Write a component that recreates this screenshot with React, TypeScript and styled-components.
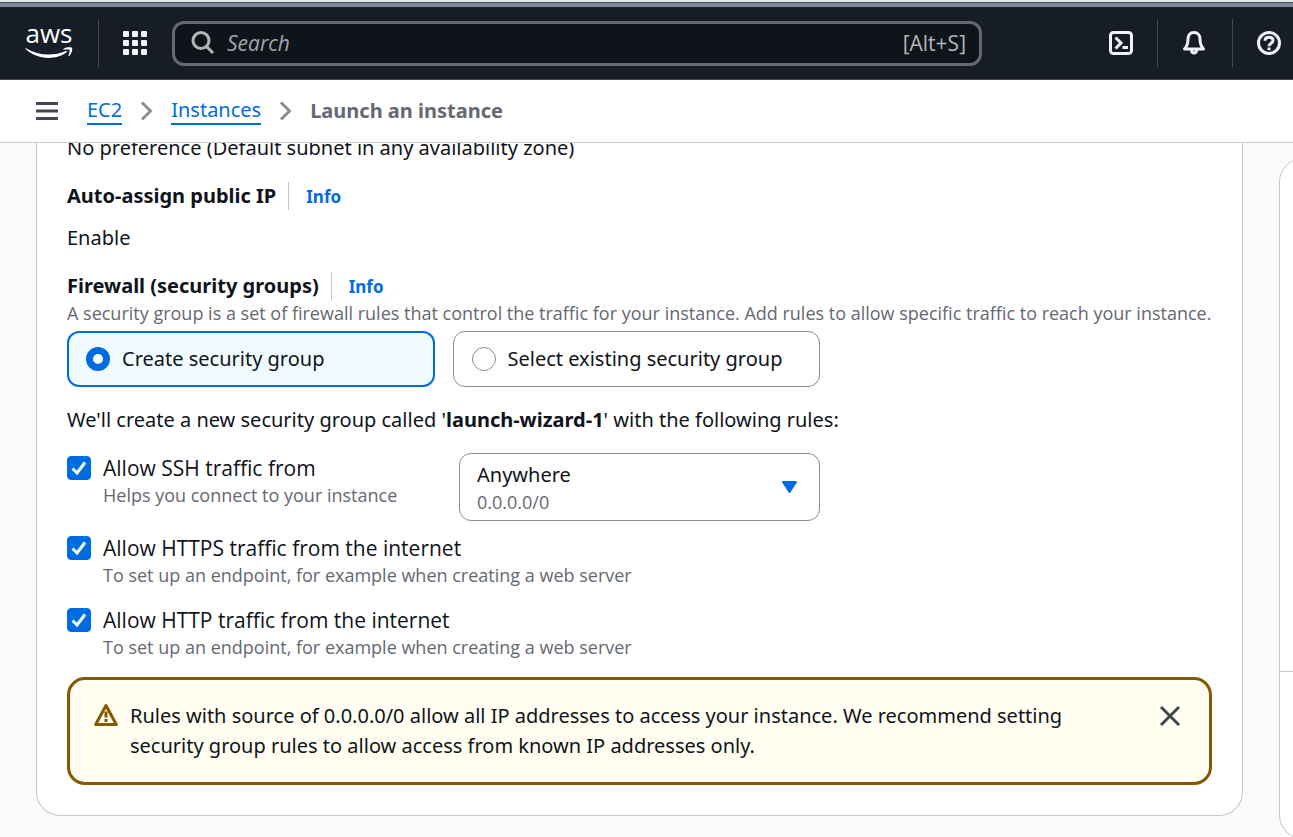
import React, { useState } from "react";
import styled, { createGlobalStyle, css } from "styled-components";

const c = {
  text: "#0f141a",
  muted: "#656871",
  link: "#006ce0",
  border: "#c6c6cd",
  control: "#8c8c94",
  page: "#fbfbfd",
  nav: "#161d26",
  navIcon: "#f0f2f8",
  warning: "#855900",
};

const bodyFont = `"Noto Sans", "Open Sans", sans-serif`;
const labelFont = `"Open Sans", "Noto Sans", sans-serif`;

const GlobalStyle = createGlobalStyle`
  *, *::before, *::after { box-sizing: border-box; }
  body {
    margin: 0;
    color: ${c.text};
    background: ${c.page};
    font-family: ${bodyFont};
    font-size: 20px;
    line-height: 30px;
    overflow-x: hidden;
  }
  p, h3, ol { margin: 0; padding: 0; }
  button, input, select { font: inherit; color: inherit; margin: 0; }
  svg { display: block; flex: none; }
`;

const Page = styled.div`
  min-height: 100vh;
  display: flex;
  flex-direction: column;
`;

const WindowEdge = styled.div`
  height: 7px;
  flex: none;
  background: #7d879c;
  border-top: 2px solid #e4e7ee;
  box-shadow: inset 0 1px 0 #414b5c;
`;

const TopBar = styled.header`
  height: 73px;
  flex: none;
  display: flex;
  align-items: center;
  background: ${c.nav};
  border-bottom: 1px solid #424650;
  padding: 0 12px 0 24px;
  font-family: ${labelFont};
  font-size: 21px;
`;

const Logo = styled.a`
  width: 50px;
  display: flex;
  flex-direction: column;
  align-items: center;
  gap: 8px;
  color: #fff;
  text-decoration: none;
  font-size: 26px;
  font-weight: 500;
  line-height: 12px;
`;

const Divider = styled.span`
  width: 1px;
  height: 48px;
  background: #424650;
`;

const NavLine = styled(Divider)`
  margin: 0 24px;
`;

const IconButton = styled.button`
  display: flex;
  align-items: center;
  justify-content: center;
  padding: 0;
  border: 0;
  background: none;
  color: ${c.navIcon};
`;

const SearchBox = styled.label`
  flex: 0 1 810px;
  min-width: 0;
  height: 45px;
  display: flex;
  align-items: center;
  gap: 12px;
  padding: 0 13px 0 16px;
  margin: 0 auto 0 25px;
  background: #0f141a;
  border: 3px solid #656871;
  border-radius: 12px;
  color: #b4b4bb;
`;

const SearchInput = styled.input`
  flex: 1;
  min-width: 0;
  padding: 0;
  border: 0;
  outline: 0;
  background: none;
  &::placeholder { color: #a4a4ad; font-style: italic; opacity: 1; }
`;

const Tools = styled.div`
  display: flex;
  align-items: center;
  gap: 24px;
`;

const CrumbBar = styled.nav`
  height: 63px;
  flex: none;
  display: flex;
  align-items: center;
  gap: 28px;
  padding: 0 35px;
  background: #fff;
  border-bottom: 1px solid ${c.border};
`;

const Crumbs = styled.ol`
  display: flex;
  align-items: center;
  gap: 18px;
  list-style: none;
  color: ${c.muted};
  li { display: flex; align-items: center; gap: 18px; }
  li:last-child { font-weight: 700; }
`;

const CrumbLink = styled.a`
  color: ${c.link};
  text-decoration: none;
  line-height: 26px;
  border-bottom: 2px solid ${c.link};
`;

const Workspace = styled.main`
  flex: 1;
  display: grid;
  grid-template-columns: minmax(0, 1fr) 14px;
  column-gap: 36px;
  padding-left: 36px;
  overflow: hidden;
`;

const Panel = styled.section`
  margin-bottom: 21px;
  padding: 0 30px 30px;
  background: #fff;
  border: 1px solid ${c.border};
  border-top: 0;
  border-radius: 0 0 24px 24px;
`;

/* Value of the field that is scrolled half under the breadcrumb bar. */
const ScrolledValue = styled.p`
  margin-top: -10px;
  margin-bottom: 18px;
`;

const FieldLabel = styled.h3`
  display: flex;
  align-items: center;
  font-size: 20px;
  font-weight: 700;
`;

const InfoLink = styled.a`
  height: 28px;
  margin-left: 12px;
  padding-left: 17px;
  border-left: 1px solid ${c.border};
  color: ${c.link};
  font-size: 17px;
  text-decoration: none;
`;

const Value = styled.p`
  margin: 12px 0 18px;
`;

const Hint = styled.p`
  color: ${c.muted};
  font-family: ${labelFont};
  font-size: 18px;
  line-height: 24px;
`;

const Tiles = styled.div`
  display: grid;
  grid-template-columns: 1fr 1fr;
  gap: 18px;
  max-width: 753px;
  margin: 6px 0 18px;
`;

const Tile = styled.label<{ $on: boolean }>`
  height: 56px;
  display: flex;
  align-items: center;
  gap: 12px;
  padding: 0 18px;
  border-radius: 12px;
  border: 1px solid ${c.control};
  ${(p) => p.$on && css`
    padding: 0 17px;
    border: 2px solid ${c.link};
    background: #f0fbff;
  `}
`;

const Radio = styled.input`
  appearance: none;
  flex: none;
  width: 24px;
  height: 24px;
  background: #fff;
  border: 1px solid ${c.control};
  border-radius: 50%;
  &:checked { border: 7px solid ${c.link}; }
`;

const Rules = styled.div`
  display: flex;
  flex-direction: column;
  gap: 18px;
  margin-top: 18px;
`;

const SourceRow = styled.div`
  display: grid;
  grid-template-columns: minmax(0, 374px) minmax(0, 361px);
  column-gap: 18px;
  align-items: start;
  margin-bottom: -6px;
`;

const CheckRow = styled.label`
  display: grid;
  grid-template-columns: 24px 1fr;
  column-gap: 12px;
  font-family: ${labelFont};
  font-size: 21px;
`;

const CheckBoxCell = styled.span`
  display: grid;
  place-items: center;
  height: 30px;
  & > * { grid-area: 1 / 1; }
  svg { pointer-events: none; }
`;

const CheckInput = styled.input`
  appearance: none;
  width: 24px;
  height: 24px;
  border: 1px solid ${c.control};
  border-radius: 4px;
  background: #fff;
  &:checked { background: ${c.link}; border-color: ${c.link}; }
`;

const SelectBox = styled.div`
  display: grid;
  grid-template: 36px 30px / 1fr 60px;
  border: 1px solid ${c.control};
  border-radius: 12px;
  svg { grid-area: 1 / 2 / 3 / 3; place-self: center; pointer-events: none; }
`;

const SelectInput = styled.select`
  grid-area: 1 / 1 / 3 / 3;
  appearance: none;
  padding: 6px 17px 30px;
  border: 0;
  border-radius: 12px;
  background: none;
  line-height: 30px;
`;

const SelectNote = styled.span`
  grid-area: 2 / 1;
  padding-left: 17px;
  color: ${c.muted};
  font-family: ${labelFont};
  font-size: 18px;
  line-height: 24px;
  pointer-events: none;
`;

const Alert = styled.div`
  display: flex;
  align-items: flex-start;
  gap: 12px;
  margin-top: 18px;
  padding: 21px 28px 21px 24px;
  background: #fffef0;
  border: 3px solid ${c.warning};
  border-radius: 18px;
  svg { margin-top: 2px; }
`;

const AlertText = styled.p`
  flex: 1;
  max-width: 970px;
`;

const CloseButton = styled(IconButton)`
  height: 30px;
  margin-left: auto;
  color: #424650;
  svg { margin: 0; }
`;

const Summary = styled.aside`
  width: 60px;
  margin: 15px 0 -2px;
  display: flex;
  flex-direction: column;
  background: #fff;
  border: 1px solid ${c.border};
  border-radius: 24px;
`;

const SummaryBody = styled.div`
  flex: 1;
  border-bottom: 1px solid ${c.border};
`;

const SummaryFooter = styled.div`
  height: 166px;
`;

const Chevron = () => (
  <svg width="13" height="20" viewBox="0 0 13 20" fill="none" stroke="#8c8c94" strokeWidth="3">
    <path d="M2 1.5 10.5 10 2 18.5" />
  </svg>
);

function Check({ label, hint }: { label: string; hint: string }) {
  const [on, setOn] = useState(true);
  return (
    <CheckRow>
      <CheckBoxCell>
        <CheckInput type="checkbox" checked={on} onChange={(e) => setOn(e.target.checked)} />
        {on && (
          <svg width="24" height="24" viewBox="0 0 24 24" fill="none" stroke="#fff" strokeWidth="3">
            <path d="M5.5 12.5 10 17 18 6.5" />
          </svg>
        )}
      </CheckBoxCell>
      <div>
        {label}
        <Hint as="div">{hint}</Hint>
      </div>
    </CheckRow>
  );
}

export default function App() {
  const [group, setGroup] = useState("create");
  const [open, setOpen] = useState(true);
  return (
    <Page>
      <GlobalStyle />
      <WindowEdge />
      <TopBar>
        <Logo href="#">
          aws
          <svg width="48" height="12" viewBox="0 0 48 12" fill="#fff">
            <path d="M1 1.2C8 5.6 15.5 7.6 23.5 7.6 29.5 7.6 35.5 6.4 41 4 42 3.6 42.6 4.7 41.7 5.3 36.8 9 30 11 23.5 11 14.5 11 6.5 7.5.6 2.1.1 1.600.5.900 1 1.200Z" />
            <path d="M38.5 1.9C41 .2 45.5 0 46.9.8 48 2.2 46.5 7 44.2 9.1 43.6 9.6 43.1 9.3 43.4 8.7 44.3 6.5 45 3.8 44.5 3.1 43.8 2.3 41.2 2.5 39 2.7 38.3 2.8 38 2.3 38.5 1.9Z" />
          </svg>
        </Logo>
        <NavLine />
        <IconButton aria-label="Services">
          <svg width="24" height="24" viewBox="0 0 24 24" fill="currentColor">
            {[0, 9, 18].map((y) => [0, 9, 18].map((x) => <rect key={`${x}-${y}`} x={x} y={y} width="6" height="6" rx="1" />))}
          </svg>
        </IconButton>
        <SearchBox>
          <svg width="24" height="24" viewBox="0 0 24 24" fill="none" stroke="currentColor" strokeWidth="3">
            <circle cx="10" cy="9.5" r="8" />
            <path d="m15 15 7 7" />
          </svg>
          <SearchInput type="search" placeholder="Search" aria-label="Search" />
          <span>[Alt+S]</span>
        </SearchBox>
        <Tools>
          <IconButton aria-label="CloudShell">
            <svg width="24" height="24" viewBox="0 0 24 24" fill="none" stroke="currentColor" strokeWidth="3">
              <rect x="1.5" y="1.5" width="21" height="21" rx="3" />
              <path d="m6.5 6.5 5.5 5.5-5.5 5.5M13.5 16.5h5.5" />
            </svg>
          </IconButton>
          <Divider />
          <IconButton aria-label="Notifications">
            <svg width="26" height="24" viewBox="0 0 26 24" fill="none" stroke="currentColor" strokeWidth="3" strokeLinejoin="round">
              <path d="M12 1.5c-4 0-6 3-6 6.500 0 5-1 7.500-3.500 10h19c-2.500-2.500-3.500-5-3.500-10 0-3.500-2-6.500-6-6.500Z" />
              <path d="M9.500 18.500c0 2.500 1 3.500 2.500 3.500s2.500-1 2.500-3.500" />
            </svg>
          </IconButton>
          <Divider />
          <IconButton aria-label="Help">
            <svg width="24" height="24" viewBox="0 0 24 24" fill="none" stroke="currentColor" strokeWidth="3">
              <circle cx="12" cy="12" r="10.5" />
              <path d="M8 9.8C8 7.5 9.7 6.3 12 6.3s4 1.300 4 3.300c0 2.700-4 2.500-4 5.600M12 16.500v2.700" />
            </svg>
          </IconButton>
        </Tools>
      </TopBar>
      <CrumbBar aria-label="Breadcrumbs">
        <IconButton aria-label="Open navigation">
          <svg width="24" height="20" viewBox="0 0 24 20" fill="none" stroke="#424650" strokeWidth="3">
            <path d="M1 2.5h22M1 10h22M1 17.5h22" />
          </svg>
        </IconButton>
        <Crumbs>
          <li><CrumbLink href="#">EC2</CrumbLink><Chevron /></li>
          <li><CrumbLink href="#">Instances</CrumbLink><Chevron /></li>
          <li>Launch an instance</li>
        </Crumbs>
      </CrumbBar>
      <Workspace>
        <Panel>
          <ScrolledValue>No preference (Default subnet in any availability zone)</ScrolledValue>
          <FieldLabel>Auto-assign public IP<InfoLink href="#">Info</InfoLink></FieldLabel>
          <Value>Enable</Value>
          <FieldLabel>Firewall (security groups)<InfoLink href="#">Info</InfoLink></FieldLabel>
          <Hint>
            A security group is a set of firewall rules that control the traffic for your instance. Add rules to allow specific traffic to reach your instance.
          </Hint>
          <Tiles>
            <Tile $on={group === "create"}>
              <Radio type="radio" name="group" checked={group === "create"} onChange={() => setGroup("create")} />
              Create security group
            </Tile>
            <Tile $on={group === "existing"}>
              <Radio type="radio" name="group" checked={group === "existing"} onChange={() => setGroup("existing")} />
              Select existing security group
            </Tile>
          </Tiles>
          <p>We'll create a new security group called '<b>launch-wizard-1</b>' with the following rules:</p>
          <Rules>
            <SourceRow>
              <Check label="Allow SSH traffic from" hint="Helps you connect to your instance" />
              <SelectBox>
                <SelectInput aria-label="SSH source" defaultValue="anywhere">
                  <option value="anywhere">Anywhere</option>
                </SelectInput>
                <SelectNote>0.0.0.0/0</SelectNote>
                <svg width="17" height="14" viewBox="0 0 17 14" fill={c.link} stroke={c.link} strokeWidth="2" strokeLinejoin="round">
                  <path d="M2 2h13L8.5 12Z" />
                </svg>
              </SelectBox>
            </SourceRow>
            <Check label="Allow HTTPS traffic from the internet" hint="To set up an endpoint, for example when creating a web server" />
            <Check label="Allow HTTP traffic from the internet" hint="To set up an endpoint, for example when creating a web server" />
          </Rules>
          {open && (
            <Alert role="status">
              <svg width="24" height="24" viewBox="0 0 24 24" fill="none" stroke={c.warning} strokeWidth="3" strokeLinejoin="round">
                <path d="M12 2.5 22.3 21.5H1.7Z" />
                <path d="M12 8.5v6M12 16v3" />
              </svg>
              <AlertText>
                Rules with source of 0.0.0.0/0 allow all IP addresses to access your instance. We recommend setting security group rules to allow access from known IP addresses only.
              </AlertText>
              <CloseButton aria-label="Dismiss" onClick={() => setOpen(false)}>
                <svg width="22" height="22" viewBox="0 0 22 22" fill="none" stroke="currentColor" strokeWidth="3">
                  <path d="m2 2 18 18M20 2 2 20" />
                </svg>
              </CloseButton>
            </Alert>
          )}
        </Panel>
        <Summary>
          <SummaryBody />
          <SummaryFooter />
        </Summary>
      </Workspace>
    </Page>
  );
}
